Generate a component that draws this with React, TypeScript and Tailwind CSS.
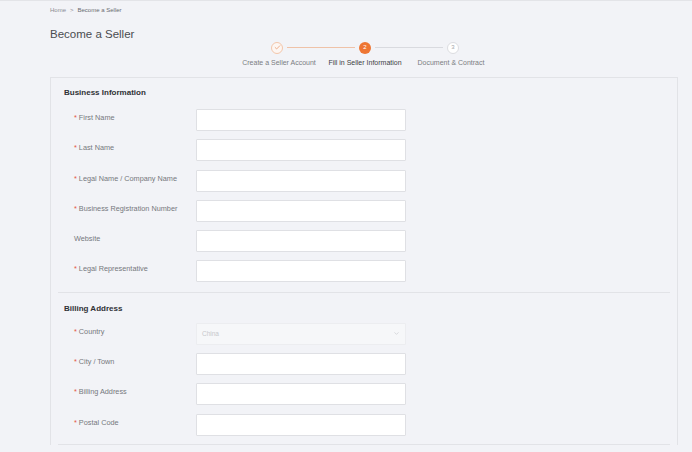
import { ChevronDown, Check } from 'lucide-react';

const businessFields = [
  { label: 'First Name', required: true },
  { label: 'Last Name', required: true },
  { label: 'Legal Name / Company Name', required: true },
  { label: 'Business Registration Number', required: true },
  { label: 'Website', required: false },
  { label: 'Legal Representative', required: true },
];

const billingFields = [
  { label: 'City / Town', required: true },
  { label: 'Billing Address', required: true },
  { label: 'Postal Code', required: true },
];

function Label({ label, required }: { label: string; required: boolean }) {
  return (
    <div className="w-[122px] shrink-0 pt-[4px] text-[7.3px] leading-[10px] text-[#76787d]">
      {required && <span className="mr-[2px] text-[#e4553f]">*</span>}
      {label}
    </div>
  );
}

function Row({ label, required }: { label: string; required: boolean }) {
  return (
    <div className="flex h-[30.3px]">
      <Label label={label} required={required} />
      <div className="h-[22px] w-[210px] rounded-[1px] border border-[#dfe0e4] bg-white" />
    </div>
  );
}

function Steps() {
  return (
    <div className="flex pt-[21px]">
      {/* step 1 - done */}
      <div className="flex w-[86px] flex-col items-center">
        <div className="flex h-[13px] w-full items-center">
          <div className="flex-1" />
          <div className="flex h-[12px] w-[12px] items-center justify-center rounded-full border border-[#f3c6ab] bg-[#fdf6f2]">
            <Check className="h-[7px] w-[7px] text-[#eaa27a]" strokeWidth={3} />
          </div>
          <div className="ml-[4px] h-px flex-1 bg-[#efc2a8]" />
        </div>
        <div className="mt-[4px] whitespace-nowrap text-[7px] text-[#7b7d82]">Create a Seller Account</div>
      </div>
      {/* step 2 - current */}
      <div className="flex w-[86px] flex-col items-center">
        <div className="flex h-[13px] w-full items-center">
          <div className="mr-[4px] h-px flex-1 bg-[#efc2a8]" />
          <div className="flex h-[12px] w-[12px] items-center justify-center rounded-full bg-[#ee7634] text-[6px] text-white">
            2
          </div>
          <div className="ml-[4px] h-px flex-1 bg-[#d9dadf]" />
        </div>
        <div className="mt-[4px] whitespace-nowrap text-[7px] text-[#3d3f44]">Fill in Seller Information</div>
      </div>
      {/* step 3 */}
      <div className="flex w-[86px] flex-col items-center">
        <div className="flex h-[13px] w-full items-center">
          <div className="mr-[4px] h-px flex-1 bg-[#d9dadf]" />
          <div className="flex h-[12px] w-[12px] items-center justify-center rounded-full border border-[#dcdde1] bg-white text-[6px] text-[#a4a6ab]">
            3
          </div>
          <div className="flex-1" />
        </div>
        <div className="mt-[4px] whitespace-nowrap text-[7px] text-[#7b7d82]">Document &amp; Contract</div>
      </div>
    </div>
  );
}

export default function App() {
  return (
    <div
      className="h-[452px] w-[692px] overflow-hidden border-t border-[#e3e4e8] bg-[#f2f3f7]"
      style={{ fontFamily: '"Liberation Sans", Arial, sans-serif' }}
    >
      {/* breadcrumb */}
      <div className="flex items-center gap-[4px] pl-[50px] pt-[5px] text-[6px] leading-[8px] text-[#8a8c91]">
        <span>Home</span>
        <span>&gt;</span>
        <span className="text-[#6a6c71]">Become a Seller</span>
      </div>

      {/* header */}
      <div className="flex h-[63px] pl-[50px]">
        <h1 className="w-[186px] pt-[13px] text-[11.5px] leading-[14px] text-[#4a4c50]">Become a Seller</h1>
        <div className="pt-[6px]">
          <Steps />
        </div>
      </div>

      {/* form card */}
      <div className="ml-[50px] w-[628px] border border-b-0 border-[#e2e3e7] pt-[10px]">
        <h2 className="pl-[13px] text-[8px] font-bold leading-[10px] text-[#2f3135]">Business Information</h2>
        <div className="mt-[11px] pl-[23px]">
          {businessFields.map((f) => (
            <Row key={f.label} {...f} />
          ))}
        </div>
        <div className="mx-[7px] mt-[1px] h-px bg-[#e2e3e7]" />

        <h2 className="mt-[11px] pl-[13px] text-[8px] font-bold leading-[10px] text-[#2f3135]">Billing Address</h2>
        <div className="mt-[9px] pl-[23px]">
          <div className="flex h-[30.3px]">
            <Label label="Country" required />
            <div className="flex h-[22px] w-[210px] items-center justify-between rounded-[1px] border border-[#ecedf0] bg-[#f6f7f9] px-[5px] text-[6.5px] text-[#c6c8cc]">
              <span>China</span>
              <ChevronDown className="h-[7px] w-[7px] text-[#c3c5c9]" />
            </div>
          </div>
          {billingFields.map((f) => (
            <Row key={f.label} {...f} />
          ))}
        </div>
        <div className="mx-[7px] h-px bg-[#e2e3e7]" />
      </div>
    </div>
  );
}
